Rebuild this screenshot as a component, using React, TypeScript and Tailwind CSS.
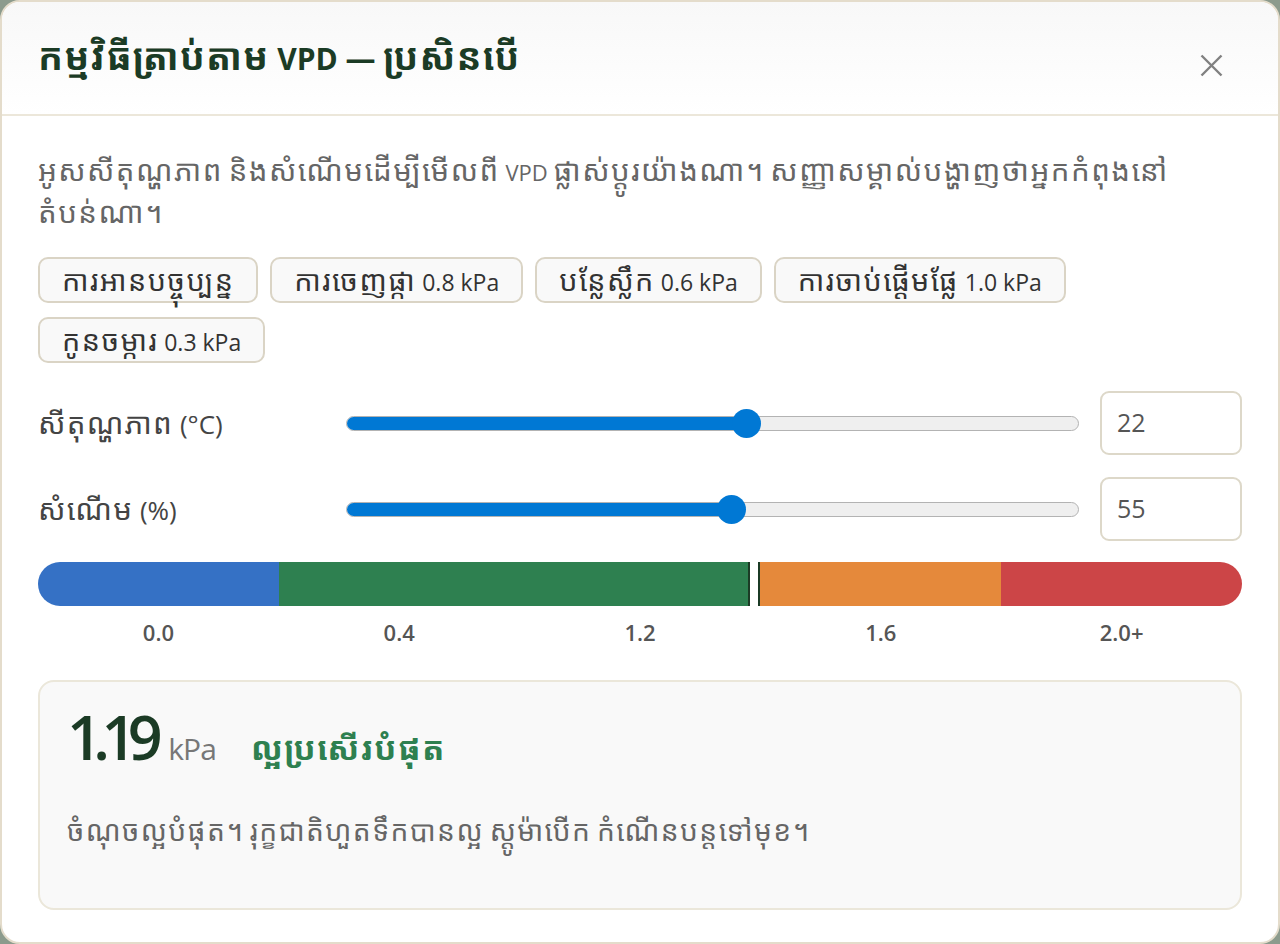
import React from "react";

function K({ children, k = "text-[1.25em] tracking-[0.05em]" }: { children: string; k?: string }) {
  const parts = children.split(/([\u1780-\u17FF\u19E0-\u19FF]+)/);
  return (
    <>
      {parts.map((p, i) =>
        i % 2 === 1 ? (
          <span key={i} className={k}>
            {p}
          </span>
        ) : (
          <React.Fragment key={i}>{p}</React.Fragment>
        )
      )}
    </>
  );
}

const chips = [
  "ការអានបច្ចុប្បន្ន",
  "ការចេញផ្កា 0.8 kPa",
  "បន្លែស្លឹក 0.6 kPa",
  "ការចាប់ផ្តើមផ្លែ 1.0 kPa",
  "កូនចម្ការ 0.3 kPa",
];

function Slider({ pct }: { pct: number }) {
  return (
    <div className="relative h-[29px] flex items-center">
      <div className="w-full h-[15px] rounded-full bg-[#efefef] border-[1.5px] border-[#b3b3b3] overflow-hidden">
        <div className="h-full bg-[#0078d4]" style={{ width: `calc(14px + ${pct} * (100% - 28px))` }} />
      </div>
      <div
        className="absolute top-0 w-[29px] h-[29px] rounded-full bg-[#0078d4]"
        style={{ left: `calc(${pct} * (100% - 28px) - 0.5px)` }}
      />
    </div>
  );
}

function Row({ label, value, pct }: { label: string; value: string; pct: number }) {
  return (
    <div className="flex items-center">
      <div className="w-[308px] text-[26px] leading-none text-[#444]">
        <K k="text-[1.14em] tracking-[0.04em]">{label}</K>
      </div>
      <div className="flex-1">
        <Slider pct={pct} />
      </div>
      <div className="ml-[21px] w-[142px] h-[64px] rounded-[9px] border-2 border-[#ddd8c9] bg-white flex items-center px-[15px] text-[25px] text-[#555]">
        {value}
      </div>
    </div>
  );
}

export default function App() {
  return (
    <div className="w-[1280px] h-[944px] bg-[#8c9b8d]" style={{ fontFamily: '"Open Sans", "Noto Sans Khmer", sans-serif' }}>
      <div className="w-full h-full rounded-[20px] border-2 border-[#e4dccb] bg-white overflow-hidden flex flex-col">
        <div className="h-[114px] shrink-0 flex items-center justify-between pl-[36px] pr-[55px] border-b-2 border-[#ece7da] bg-gradient-to-b from-[#f8f8f8] to-white">
          <h1 className="text-[30px] leading-none font-bold text-[#1b3b25] -mt-[4px]">
            <K k="text-[1.23em] tracking-[0.03em]">កម្មវិធីត្រាប់តាម VPD — ប្រសិនបើ</K>
          </h1>
          <svg width="23" height="23" viewBox="0 0 23 23" className="mt-[14px]">
            <path d="M1.5 1.5 L21.5 21.5 M21.5 1.5 L1.5 21.5" stroke="#808080" strokeWidth="2.4" fill="none" />
          </svg>
        </div>

        <div className="flex-1 px-[36px] pt-[33px]">
          <div className="h-[84px] text-[22px] leading-[42px] text-[#666]">
            <div className="h-[42px] whitespace-nowrap">
              <K k="text-[1.34em] tracking-[0.05em]">អូសសីតុណ្ហភាព និងសំណើមដើម្បីមើលពី VPD ផ្លាស់ប្តូរយ៉ាងណា។ សញ្ញាសម្គាល់បង្ហាញថាអ្នកកំពុងនៅ</K>
            </div>
            <div className="h-[42px]">
              <K k="text-[1.34em] tracking-[0.05em]">តំបន់ណា។</K>
            </div>
          </div>

          <div className="mt-[24px] flex flex-wrap gap-x-[12px] gap-y-[14px]">
            {chips.map((c) => (
              <div
                key={c}
                className="h-[46px] px-[22px] rounded-[10px] border-2 border-[#dad4c5] bg-[#f9f9f9] flex items-center text-[23px] leading-none text-[#333]"
              >
                <span>
                  <K>{c}</K>
                </span>
              </div>
            ))}
          </div>

          <div className="mt-[28px] flex flex-col gap-[22px]">
            <Row label="សីតុណ្ហភាព (°C)" value="22" pct={0.548} />
            <Row label="សំណើម (%)" value="55" pct={0.527} />
          </div>

          <div className="mt-[21px] relative h-[44px] rounded-full overflow-hidden flex">
            <div className="w-[20%] bg-[#3571c5]" />
            <div className="w-[40%] bg-[#2e8050]" />
            <div className="w-[20%] bg-[#e5893b]" />
            <div className="w-[20%] bg-[#cc4547]" />
            <div
              className="absolute top-0 h-full w-[12px] -translate-x-1/2 bg-white border-x-2 border-[#1b3b25]"
              style={{ left: `${(1.19 / 2) * 100}%` }}
            />
          </div>
          <div className="grid grid-cols-5 mt-[12px] text-[22px] leading-[28px] font-semibold text-[#555] text-center">
            <span>0.0</span>
            <span>0.4</span>
            <span>1.2</span>
            <span>1.6</span>
            <span>2.0+</span>
          </div>

          <div className="mt-[34px] h-[230px] rounded-[16px] border-2 border-[#ebe7da] bg-[#f9f9f9] px-[27px] pt-[24px]">
            <div className="flex items-baseline leading-none">
              <span className="text-[61px] font-semibold text-[#1b3b25] tracking-[-0.14em]">1.19</span>
              <span className="ml-[14px] text-[30px] text-[#777] tracking-[-0.03em]">kPa</span>
              <span className="ml-[35px] text-[33px] font-bold text-[#2e8050] tracking-[0.04em]">ល្អប្រសើរបំផុត</span>
            </div>
            <p className="mt-[43px] text-[22px] leading-[40px] text-[#666]">
              <K k="text-[1.28em] tracking-[0.05em]">ចំណុចល្អបំផុត។ រុក្ខជាតិហួតទឹកបានល្អ ស្តូម៉ាបើក កំណើនបន្តទៅមុខ។</K>
            </p>
          </div>
        </div>
      </div>
    </div>
  );
}
